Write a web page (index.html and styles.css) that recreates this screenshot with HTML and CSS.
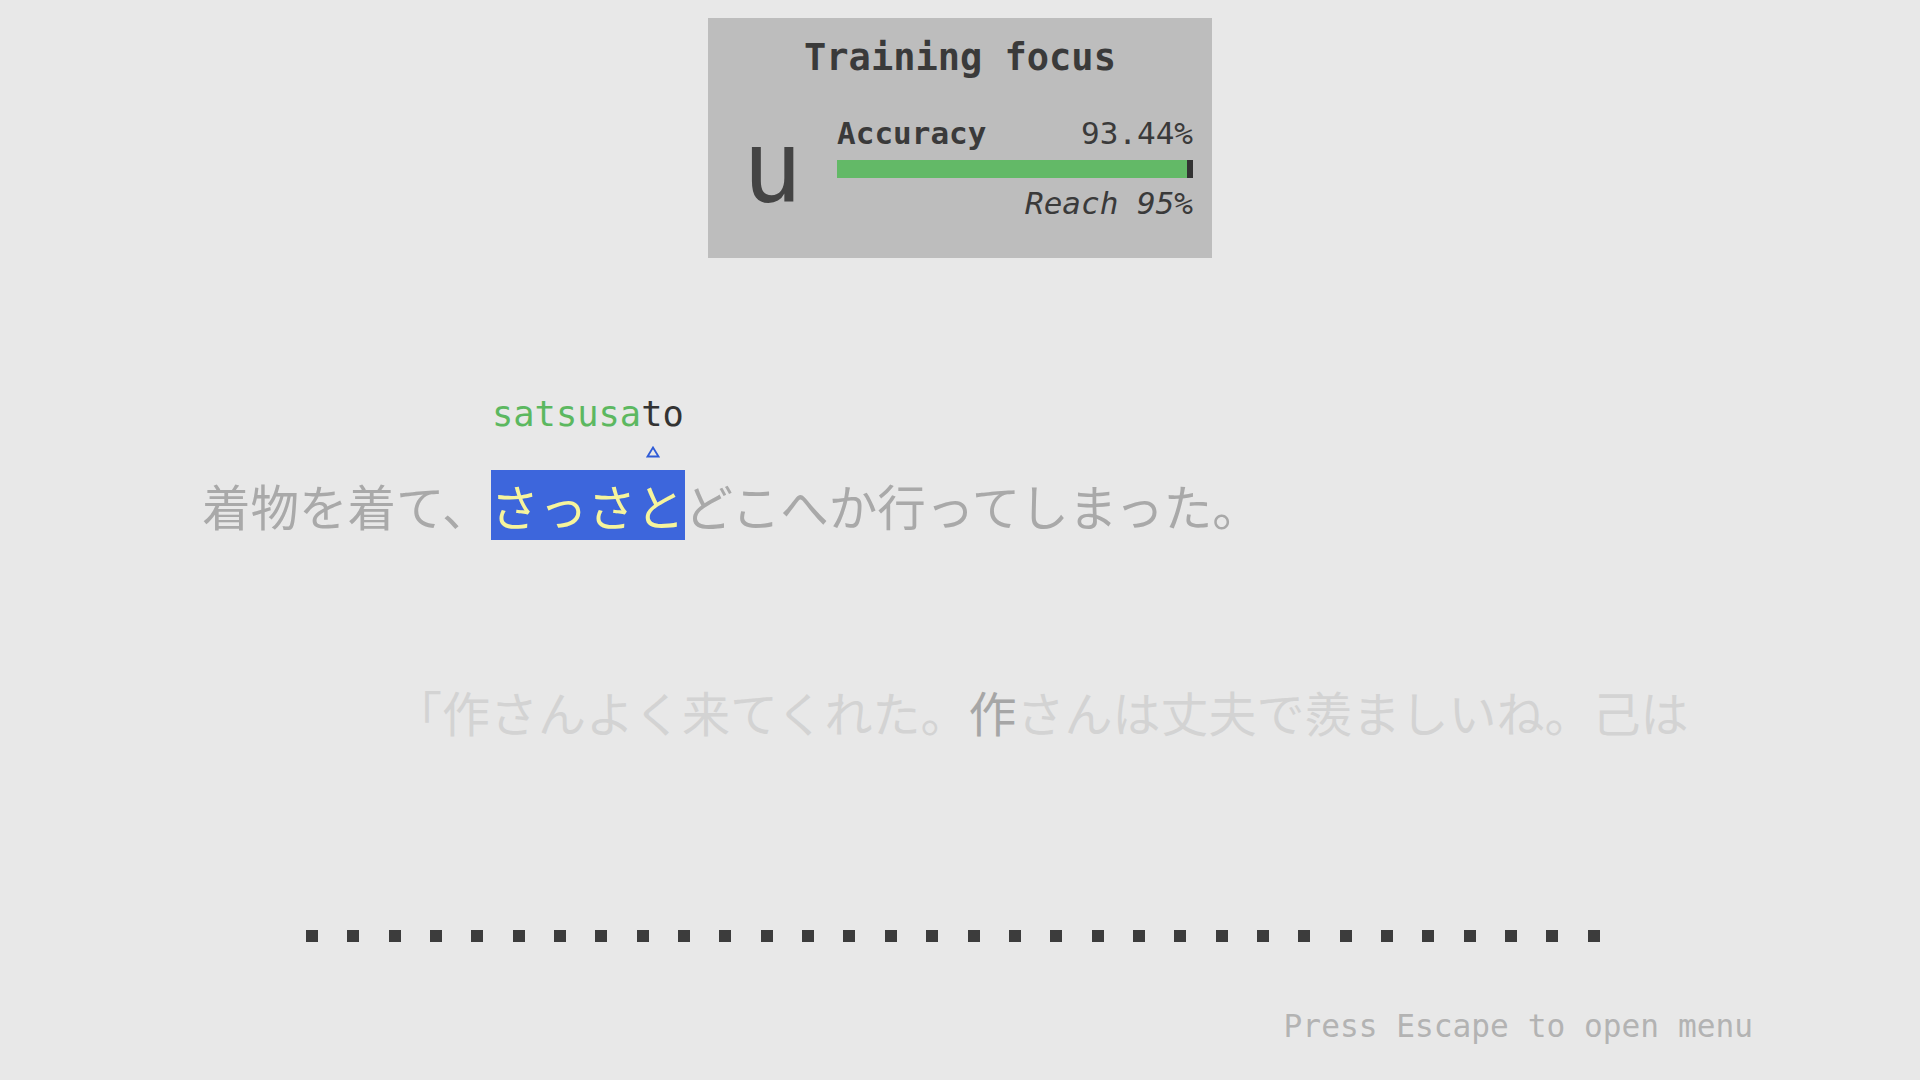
FILE: index.html
```html
<!DOCTYPE html>
<html lang="ja">
<head>
<meta charset="utf-8">
<title>Typing trainer</title>
<link rel="stylesheet" href="styles.css">
</head>
<body>
<div class="focus-box">
  <div class="focus-title">Training focus</div>
  <div class="focus-row">
    <div class="focus-key">u</div>
    <div class="focus-stats">
      <div class="stat-line"><span class="stat-label">Accuracy</span><span class="stat-value">93.44%</span></div>
      <div class="bar"><div class="bar-fill" style="width: 98.3%"></div><div class="bar-mark"></div></div>
      <div class="reach">Reach 95%</div>
    </div>
  </div>
</div>

<div class="romaji"><span class="typed">satsusa</span><span class="pending">to</span></div>
<div class="caret-row"><svg class="caret" width="14" height="12" viewBox="0 0 14 12"><polygon points="7,1.5 12.5,10.5 1.5,10.5" fill="none" stroke="#2f5bd6" stroke-width="1.8" stroke-linejoin="miter"/></svg></div>
<div class="line current">着物を着て、<span class="word">さっさと</span>どこへか行ってしまった。</div>
<div class="line next">「作さんよく来てくれた。<span class="hint">作</span>さんは丈夫で羨ましいね。己は</div>

<div class="dots">
  <span class="dot"></span><span class="dot"></span><span class="dot"></span><span class="dot"></span>
  <span class="dot"></span><span class="dot"></span><span class="dot"></span><span class="dot"></span>
  <span class="dot"></span><span class="dot"></span><span class="dot"></span><span class="dot"></span>
  <span class="dot"></span><span class="dot"></span><span class="dot"></span><span class="dot"></span>
  <span class="dot"></span><span class="dot"></span><span class="dot"></span><span class="dot"></span>
  <span class="dot"></span><span class="dot"></span><span class="dot"></span><span class="dot"></span>
  <span class="dot"></span><span class="dot"></span><span class="dot"></span><span class="dot"></span>
  <span class="dot"></span><span class="dot"></span><span class="dot"></span><span class="dot"></span>
</div>

<div class="hint-bar">Press Escape to open menu</div>
</body>
</html>
```

FILE: styles.css
```css
html, body {
  margin: 0;
  padding: 0;
}
body {
  background: #e8e8e8;
  width: 1920px;
  height: 1080px;
  overflow: hidden;
  font-family: "DejaVu Sans Mono", "Liberation Mono", monospace;
  color: #3a3a3a;
}

.focus-box {
  width: 504px;
  box-sizing: border-box;
  margin: 18px auto 0;
  background: #bdbdbd;
  padding: 18px 19px 37px 34.5px;
}
.focus-title {
  font-size: 37px;
  line-height: 44px;
  font-weight: bold;
  text-align: center;
  margin-left: -15.5px;
  color: #3a3a3a;
}
.focus-row {
  display: flex;
  align-items: center;
  margin-top: 35px;
  gap: 35px;
}
.focus-key {
  font-family: "DejaVu Sans Mono", monospace;
  font-size: 99px;
  line-height: 96px;
  width: 59.6px;
  color: #444444;
}
.focus-stats {
  width: 356px;
  display: flex;
  flex-direction: column;
}
.stat-line {
  display: flex;
  justify-content: space-between;
  font-size: 31px;
  line-height: 36px;
}
.stat-label {
  font-weight: bold;
}
.bar {
  margin-top: 9px;
  height: 18px;
  display: flex;
}
.bar-fill {
  background: #63b967;
  height: 100%;
}
.bar-mark {
  flex: 1;
  background: #333333;
  height: 100%;
}
.reach {
  margin-top: 7px;
  font-size: 31px;
  line-height: 36px;
  font-style: italic;
  text-align: right;
}

.romaji {
  margin-top: 134.5px;
  padding-left: 492px;
  font-size: 35.4px;
  line-height: 41px;
}
.typed {
  color: #5cb860;
}
.pending {
  color: #333333;
}
.caret-row {
  margin-top: 12.5px;
  padding-left: 646px;
  height: 12px;
  line-height: 0;
}
.caret {
  display: block;
}

.line {
  font-family: "Noto Sans CJK JP", "Noto Sans CJK SC", sans-serif;
  font-size: 48px;
  line-height: normal;
  white-space: nowrap;
}
.current {
  margin-top: 12px;
  padding-left: 202px;
  font-size: 48.5px;
  color: #a9a9a9;
}
.word {
  background: #3d66dc;
  color: #f6f49c;
}
.next {
  margin-top: 136px;
  padding-left: 394px;
  color: #d3d3d3;
}
.hint {
  color: #a6a6a6;
}

.dots {
  margin-top: 184px;
  padding-left: 306px;
  display: flex;
  gap: 29.35px;
}
.dot {
  width: 12px;
  height: 12px;
  background: #3c3c3c;
}

.hint-bar {
  margin-top: 66px;
  padding-right: 167px;
  text-align: right;
  font-size: 31.2px;
  line-height: 36px;
  color: #b3b3b3;
}
```
